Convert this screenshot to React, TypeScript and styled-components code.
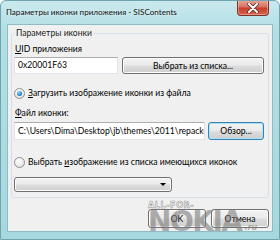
import React from "react";
import styled, { createGlobalStyle } from "styled-components";

const Global = createGlobalStyle`
  html, body { margin: 0; padding: 0; background: #ffffff; }
  body { width: 280px; height: 240px; overflow: hidden; }
  * { box-sizing: border-box; }
`;

const font = `Lato, "Open Sans", "Noto Sans", sans-serif`;

const Window = styled.div`
  position: relative;
  width: 280px;
  height: 240px;
  display: flex;
  flex-direction: column;
  background: linear-gradient(180deg, #c9e9ee 0%, #b2dfe5 12%, #a6d8df 100%);
  border: 1px solid #6fa6ae;
  border-radius: 6px 6px 0 0;
  font-family: ${font};
  font-size: 8.6px;
  color: #000;
  overflow: hidden;
`;

const TitleBar = styled.div`
  height: 23px;
  display: flex;
  align-items: flex-start;
  justify-content: space-between;
  padding-left: 5px;
  padding-right: 10px;
`;

const TitleText = styled.div`
  font-size: 8.1px;
  line-height: 12px;
  margin-top: 5px;
  color: #111;
  white-space: nowrap;
  text-shadow: 0 0 4px rgba(255, 255, 255, 0.9);
`;

const CloseButton = styled.div`
  width: 32px;
  height: 16px;
  margin-top: -1px;
  border: 1px solid #7b3327;
  border-top: none;
  border-radius: 0 0 4px 4px;
  background: linear-gradient(180deg, #e9a99d 0%, #d9715f 45%, #c6402b 55%, #d8624a 100%);
  box-shadow: inset 0 0 0 1px rgba(255, 255, 255, 0.35);
  display: flex;
  align-items: center;
  justify-content: center;
`;

const Client = styled.div`
  flex: 1;
  margin: 0 6px;
  background: #f0f0f0;
  border: 1px solid #8fbcc3;
  padding: 2px 3px 0 3px;
  display: flex;
  flex-direction: column;
`;

const BottomFrame = styled.div`
  height: 7px;
`;

const GroupBox = styled.fieldset`
  margin: 0;
  border: 1px solid #d5dfe5;
  border-radius: 3px;
  padding: 0 4px 5px 2px;
  display: flex;
  flex-direction: column;
  min-width: 0;
`;

const Legend = styled.legend`
  padding: 0 2px;
  line-height: 13px;
  color: #1e1e1e;
`;

const Label = styled.div<{ $mt: number }>`
  line-height: 12px;
  margin-top: ${(p) => p.$mt}px;
  padding-left: 1px;
  white-space: nowrap;
`;

const Row = styled.div<{ $mt: number; $gap: number }>`
  display: flex;
  gap: ${(p) => p.$gap}px;
  margin-top: ${(p) => p.$mt}px;
`;

const TextBox = styled.div<{ $w?: number; $h: number }>`
  ${(p) => (p.$w ? `width: ${p.$w}px; flex: none;` : `flex: 1; min-width: 0;`)}
  height: ${(p) => p.$h}px;
  background: #fff;
  border: 1px solid #e2e3ea;
  border-top-color: #abadb3;
  padding-left: 3px;
  line-height: ${(p) => p.$h - 2}px;
  white-space: nowrap;
  overflow: hidden;
`;

const Button = styled.div<{ $w?: number; $h: number; $focus?: boolean }>`
  ${(p) => (p.$w ? `width: ${p.$w}px; flex: none;` : `flex: 1;`)}
  height: ${(p) => p.$h}px;
  border: 1px solid ${(p) => (p.$focus ? "#3c7fb1" : "#707070")};
  border-radius: 3px;
  background: linear-gradient(180deg, #f2f2f2 0%, #ebebeb 48%, #dddddd 52%, #cfcfcf 100%);
  box-shadow: inset 0 0 0 1px ${(p) => (p.$focus ? "#a6e3fb" : "#fcfcfc")};
  display: flex;
  align-items: center;
  justify-content: center;
  white-space: nowrap;
`;

const RadioRow = styled.div<{ $mt: number }>`
  display: flex;
  align-items: center;
  gap: 3px;
  margin-top: ${(p) => p.$mt}px;
  line-height: 12px;
  white-space: nowrap;
`;

const RadioCircle = styled.span<{ $checked?: boolean }>`
  width: 11px;
  height: 11px;
  border-radius: 50%;
  border: 1px solid #8f8f8f;
  background: radial-gradient(circle at 40% 35%, #ffffff 0%, #e6e6e6 70%, #d4d4d4 100%);
  display: flex;
  align-items: center;
  justify-content: center;
  flex: none;
  &::after {
    content: "";
    display: ${(p) => (p.$checked ? "block" : "none")};
    width: 5px;
    height: 5px;
    border-radius: 50%;
    background: radial-gradient(circle at 40% 35%, #9fd7f5 0%, #2a7fc4 60%, #165a9a 100%);
  }
`;

const Combo = styled.div`
  width: 158px;
  height: 15px;
  margin-top: 9px;
  border: 1px solid #707070;
  border-radius: 3px;
  background: linear-gradient(180deg, #f2f2f2 0%, #ebebeb 48%, #dddddd 52%, #cfcfcf 100%);
  box-shadow: inset 0 0 0 1px #fcfcfc;
  display: flex;
  justify-content: flex-end;
  align-items: center;
  padding-right: 5px;
`;

const Arrow = styled.span`
  width: 0;
  height: 0;
  border-left: 3px solid transparent;
  border-right: 3px solid transparent;
  border-top: 3px solid #000;
`;

const ButtonBar = styled.div`
  display: flex;
  justify-content: flex-end;
  gap: 5px;
  margin-top: 11px;
`;

const U = styled.span`
  text-decoration: underline;
  text-underline-offset: 1px;
`;

const Watermark = styled.div`
  position: absolute;
  left: 147px;
  top: 200px;
  width: 126px;
  height: 38px;
  pointer-events: none;
  font-family: "DejaVu Sans", "Liberation Sans", sans-serif;
  font-weight: bold;
  color: rgba(125, 125, 125, 0.6);
`;

const WmSmall = styled.div`
  font-size: 8px;
  line-height: 9px;
  letter-spacing: 0.6px;
  color: rgba(255, 255, 255, 0.5);
  -webkit-text-stroke: 0.6px rgba(110, 110, 110, 0.7);
`;

const WmBig = styled.div`
  display: flex;
  align-items: flex-end;
  gap: 3px;
  margin-top: 1px;
`;

const WmNokia = styled.span`
  font-size: 28px;
  line-height: 22px;
  letter-spacing: -1.5px;
`;

const WmRu = styled.span`
  font-size: 8px;
  line-height: 10px;
  font-style: italic;
`;

export default function App() {
  return (
    <>
      <Global />
      <Window>
        <TitleBar>
          <TitleText>Параметры иконки приложения - SISContents</TitleText>
          <CloseButton>
            <svg width="12" height="10" viewBox="0 0 12 10">
              <path d="M2 1 L10 9 M10 1 L2 9" stroke="#4a2a26" strokeWidth="3.4" strokeLinecap="round" />
              <path d="M2 1 L10 9 M10 1 L2 9" stroke="#ffffff" strokeWidth="2" strokeLinecap="round" />
            </svg>
          </CloseButton>
        </TitleBar>
        <Client>
          <GroupBox>
            <Legend>Параметры иконки</Legend>
            <Label $mt={3}>
              <U>U</U>ID приложения
            </Label>
            <Row $mt={2} $gap={4}>
              <TextBox $w={104} $h={17}>0x20001F63</TextBox>
              <Button $h={17}>Выбрать из списка...</Button>
            </Row>
            <RadioRow $mt={13}>
              <RadioCircle $checked />
              <span>
                <U>З</U>агрузить изображение иконки из файла
              </span>
            </RadioRow>
            <Label $mt={8}>
              <U>Ф</U>айл иконки:
            </Label>
            <Row $mt={3} $gap={3}>
              <TextBox $h={18}>C:\Users\Dima\Desktop\jb\themes\2011\repacked</TextBox>
              <Button $w={56} $h={18} $focus>
                Обзор...
              </Button>
            </Row>
            <RadioRow $mt={16}>
              <RadioCircle />
              <span>
                Выбрать <U>и</U>зображение из списка имеющихся иконок
              </span>
            </RadioRow>
            <Combo>
              <Arrow />
            </Combo>
          </GroupBox>
          <ButtonBar>
            <Button $w={58} $h={19}>OK</Button>
            <Button $w={58} $h={19}>Отмена</Button>
          </ButtonBar>
        </Client>
        <BottomFrame />
        <Watermark>
          <WmSmall>ALL-FOR-</WmSmall>
          <WmBig>
            <WmNokia>NOKIA</WmNokia>
            <WmRu>.ru</WmRu>
          </WmBig>
        </Watermark>
      </Window>
    </>
  );
}
